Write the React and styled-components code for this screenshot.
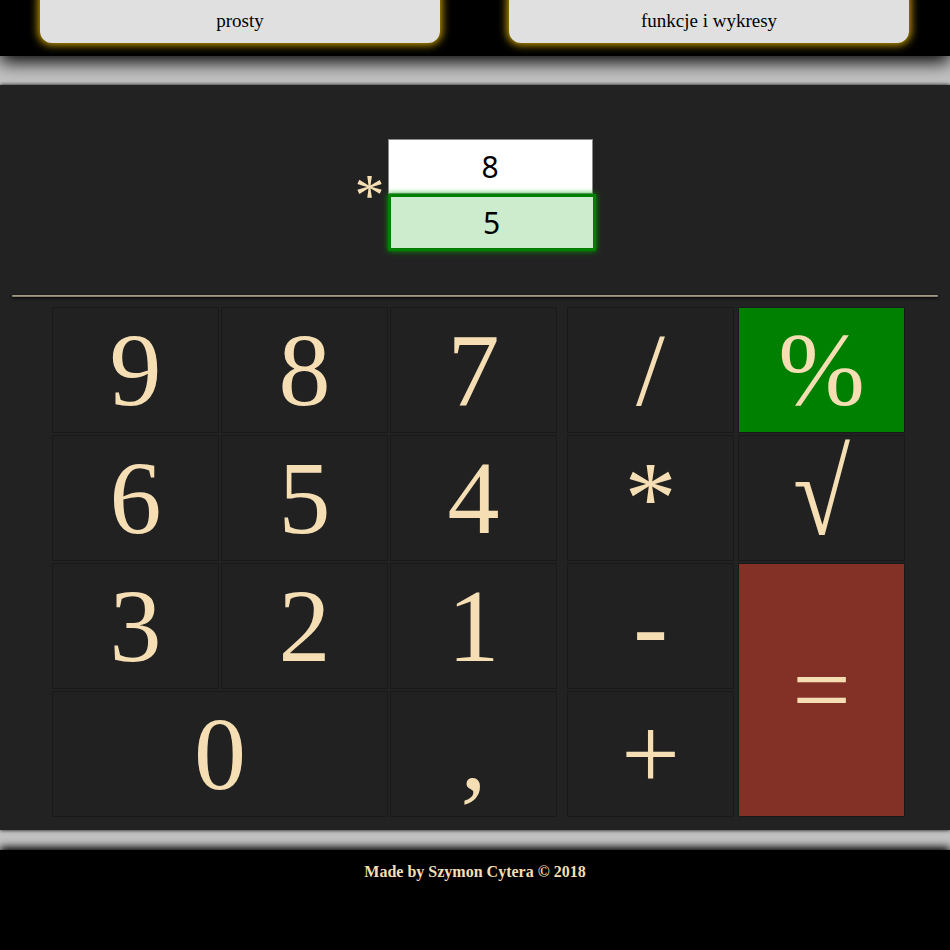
import React from 'react'
import styled, { createGlobalStyle } from 'styled-components'

const GlobalStyle = createGlobalStyle`
    body {
        margin: 0;
        background: #c2c2c2;
        font-family: "Liberation Serif", "Times New Roman", serif;
    }
`

const Header = styled.header`
    position: relative;
    z-index: 2;
    height: 56px;
    background: #000;
    display: flex;
    justify-content: space-between;
    padding: 0 41px 0 40px;
    box-shadow: 0 6px 18px #000;
`

const ModeButton = styled.button`
    width: 400px;
    height: 55px;
    margin-top: -12px;
    padding: 10px 0 0;
    background: #e0e0e0;
    border: none;
    border-radius: 12px;
    box-shadow: 0 0 8px 2px #c9a100;
    font-family: "Liberation Serif", serif;
    font-size: 19px;
    color: #000;
`

const Main = styled.main`
    position: relative;
    z-index: 1;
    margin-top: 29px;
    background: #222;
    box-shadow: 0 0 4px #000;
    padding: 54px 0 13px;
`

const Display = styled.div`
    display: flex;
    justify-content: center;
    align-items: center;
`

const Operator = styled.span`
    font-size: 60px;
    line-height: 1;
    color: wheat;
    margin-right: 3px;
`

const Fields = styled.div`
    display: flex;
    flex-direction: column;
    align-items: flex-start;
`

const Field = styled.input`
    box-sizing: content-box;
    width: ${p => (p.$active ? '202px' : '203px')};
    height: ${p => (p.$active ? '51px' : '53px')};
    margin: 0;
    padding: 0;
    text-align: center;
    font-family: "Noto Sans", "Open Sans", sans-serif;
    font-size: 30px;
    color: #000;
    background: ${p => (p.$active ? '#cdeccd' : '#fff')};
    border: ${p => (p.$active ? '3px solid #008000' : '1px solid #8a8a8a')};
    box-shadow: ${p => (p.$active ? '0 0 6px #00a000' : 'none')};
    outline: none;
`

const Divider = styled.div`
    margin: 44px 12px 0;
    height: 2px;
    border-radius: 2px;
    background: linear-gradient(to bottom, #b0a690, #7d7565);
    box-shadow: 0 1px 3px #000;
`

const Keypad = styled.div`
    display: flex;
    gap: 10px;
    margin: 10px 0 0 52px;
`

const KeyGrid = styled.div`
    display: grid;
    grid-template-columns: repeat(${p => p.$cols}, 167px);
    grid-auto-rows: 126px;
    row-gap: 2px;
    column-gap: ${p => p.$gap}px;
`

const Key = styled.button`
    grid-column: span ${p => p.$span || 1};
    grid-row: span ${p => p.$rows || 1};
    display: flex;
    align-items: center;
    justify-content: center;
    margin: 0;
    padding: 0;
    background: ${p => p.$bg || '#212121'};
    border: 1px solid #191919;
    color: wheat;
    font-family: "Liberation Serif", "Times New Roman", serif;
    font-size: 104px;
    line-height: 1;
`

const Root = styled.span`
    display: inline-block;
    transform: scaleY(1.15) translateY(-4px);
`

const Footer = styled.footer`
    position: relative;
    z-index: 1;
    margin-top: 20px;
    height: 100px;
    background: #000;
    box-shadow: 0 -3px 8px #000;
    padding-top: 13px;
    box-sizing: border-box;
    text-align: center;
    color: wheat;
    font-weight: bold;
    font-size: 16px;
`

const digits = ['9', '8', '7', '6', '5', '4', '3', '2', '1']

const App = () => {
    return (
        <>
            <GlobalStyle />
            <Header>
                <ModeButton>prosty</ModeButton>
                <ModeButton>funkcje i wykresy</ModeButton>
            </Header>
            <Main>
                <Display>
                    <Operator>*</Operator>
                    <Fields>
                        <Field defaultValue="8" />
                        <Field $active defaultValue="5" />
                    </Fields>
                </Display>
                <Divider />
                <Keypad>
                    <KeyGrid $cols={3} $gap={2}>
                        {digits.map(d => (
                            <Key key={d}>{d}</Key>
                        ))}
                        <Key $span={2}>0</Key>
                        <Key>,</Key>
                    </KeyGrid>
                    <KeyGrid $cols={2} $gap={4}>
                        <Key>/</Key>
                        <Key $bg="#008000">%</Key>
                        <Key>*</Key>
                        <Key>
                            <Root>√</Root>
                        </Key>
                        <Key>-</Key>
                        <Key $rows={2} $bg="#833027">=</Key>
                        <Key>+</Key>
                    </KeyGrid>
                </Keypad>
            </Main>
            <Footer>Made by Szymon Cytera © 2018</Footer>
        </>
    )
}

export default App
